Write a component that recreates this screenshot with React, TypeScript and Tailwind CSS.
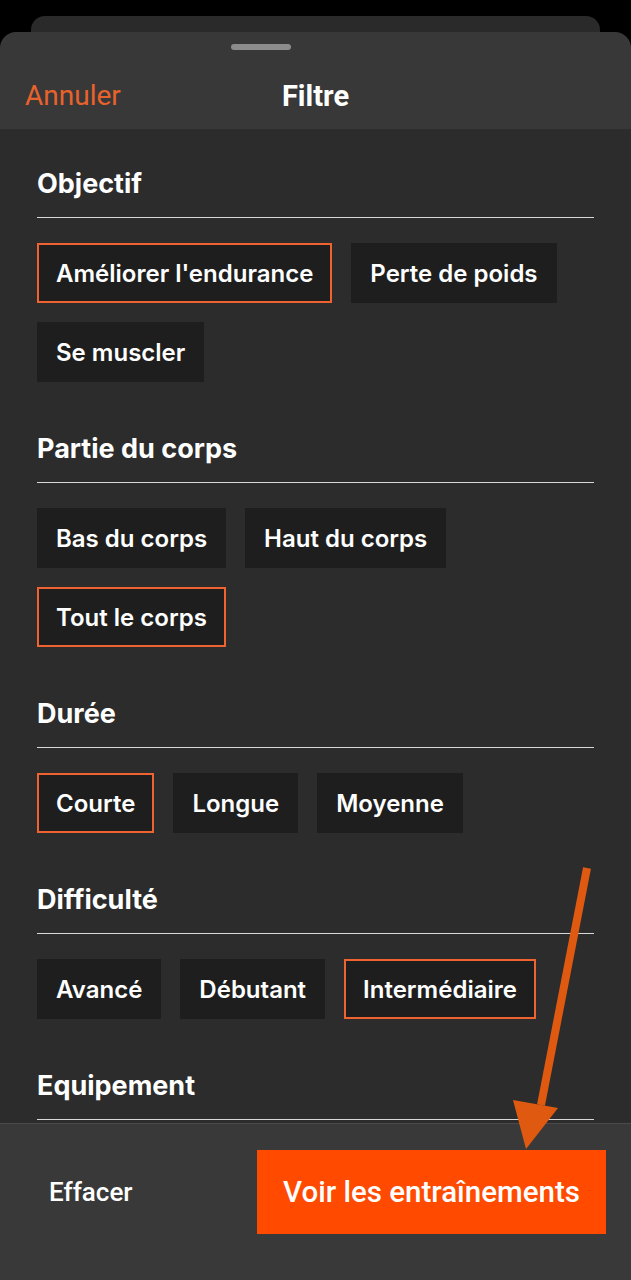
import React from "react";

type Chip = { label: string; selected?: boolean };
type Section = { title: string; chips: Chip[] };

const sections: Section[] = [
  {
    title: "Objectif",
    chips: [
      { label: "Améliorer l'endurance", selected: true },
      { label: "Perte de poids" },
      { label: "Se muscler" },
    ],
  },
  {
    title: "Partie du corps",
    chips: [
      { label: "Bas du corps" },
      { label: "Haut du corps" },
      { label: "Tout le corps", selected: true },
    ],
  },
  {
    title: "Durée",
    chips: [
      { label: "Courte", selected: true },
      { label: "Longue" },
      { label: "Moyenne" },
    ],
  },
  {
    title: "Difficulté",
    chips: [
      { label: "Avancé" },
      { label: "Débutant" },
      { label: "Intermédiaire", selected: true },
    ],
  },
];

const roboto = { fontFamily: "Roboto, 'Liberation Sans', sans-serif" };
const inter = { fontFamily: "Inter, 'Liberation Sans', sans-serif" };

function ChipView({ chip }: { chip: Chip }) {
  return (
    <div
      className={
        "h-[60px] px-[17px] pt-[2px] flex items-center bg-[#1e1e1e] border-2 " +
        (chip.selected ? "border-[#ee6330]" : "border-transparent")
      }
    >
      <span
        className="text-[24px] font-semibold text-white leading-none"
        style={inter}
      >
        {chip.label}
      </span>
    </div>
  );
}

function Heading({ title }: { title: string }) {
  return (
    <>
      <div
        className="text-[27px] font-bold text-white leading-[32px]"
        style={inter}
      >
        {title}
      </div>
      <div className="mt-[17px] h-px bg-[#d8d8d8]" />
    </>
  );
}

function SectionView({ s }: { s: Section }) {
  return (
    <div className="mb-[51px]">
      <Heading title={s.title} />
      <div className="mt-[25px] flex flex-wrap gap-[19px]">
        {s.chips.map((c) => (
          <ChipView key={c.label} chip={c} />
        ))}
      </div>
    </div>
  );
}

export default function App() {
  return (
    <div className="relative w-[631px] h-[1280px] bg-black overflow-hidden">
      <div className="pt-[16px] px-[26px] w-full">
        <div className="h-[30px] bg-[#2a2a2a] rounded-t-[14px] mx-[5px]" />
      </div>
      <div className="absolute left-0 right-0 top-[32px] bottom-0 flex flex-col rounded-t-[16px] overflow-hidden">
        {/* header */}
        <div className="h-[97px] bg-[#383838] relative shrink-0">
          <div className="absolute left-[231px] top-[12px] w-[60px] h-[6px] rounded-full bg-[#8c8c8c]" />
          <div className="absolute left-[25px] top-[47px] text-[28px] leading-[34px] text-[#e8622c]" style={roboto}>
            Annuler
          </div>
          <div className="absolute left-0 right-0 top-[47px] text-center text-[29px] leading-[34px] font-bold text-white" style={roboto}>
            Filtre
          </div>
        </div>
        {/* content */}
        <div className="flex-1 bg-[#2c2c2c] overflow-hidden px-[37px] pt-[39px]">
          <div className="w-[557px]">
            {sections.map((s) => (
              <SectionView key={s.title} s={s} />
            ))}
            <Heading title="Equipement" />
          </div>
        </div>
        {/* footer */}
        <div className="h-[157px] shrink-0 bg-[#393939] border-t border-[#4a4a4a] flex items-start justify-between pl-[49px] pr-[25px] pt-[26px]">
          <div className="h-[84px] flex items-center">
            <span className="text-[26px] font-medium text-white" style={roboto}>
              Effacer
            </span>
          </div>
          <div className="w-[349px] h-[84px] bg-[#ff4a00] flex items-center justify-center">
            <span className="text-[29.5px] font-medium text-white" style={roboto}>
              Voir les entraînements
            </span>
          </div>
        </div>
      </div>
      {/* annotation arrow */}
      <svg
        className="absolute left-0 top-0 pointer-events-none"
        width="631"
        height="1280"
        viewBox="0 0 631 1280"
      >
        <line x1="587" y1="868" x2="541" y2="1105" stroke="#df5a10" strokeWidth="8" strokeLinecap="butt" />
        <polygon points="513,1100 558,1108 526,1149" fill="#df5a10" />
      </svg>
    </div>
  );
}
